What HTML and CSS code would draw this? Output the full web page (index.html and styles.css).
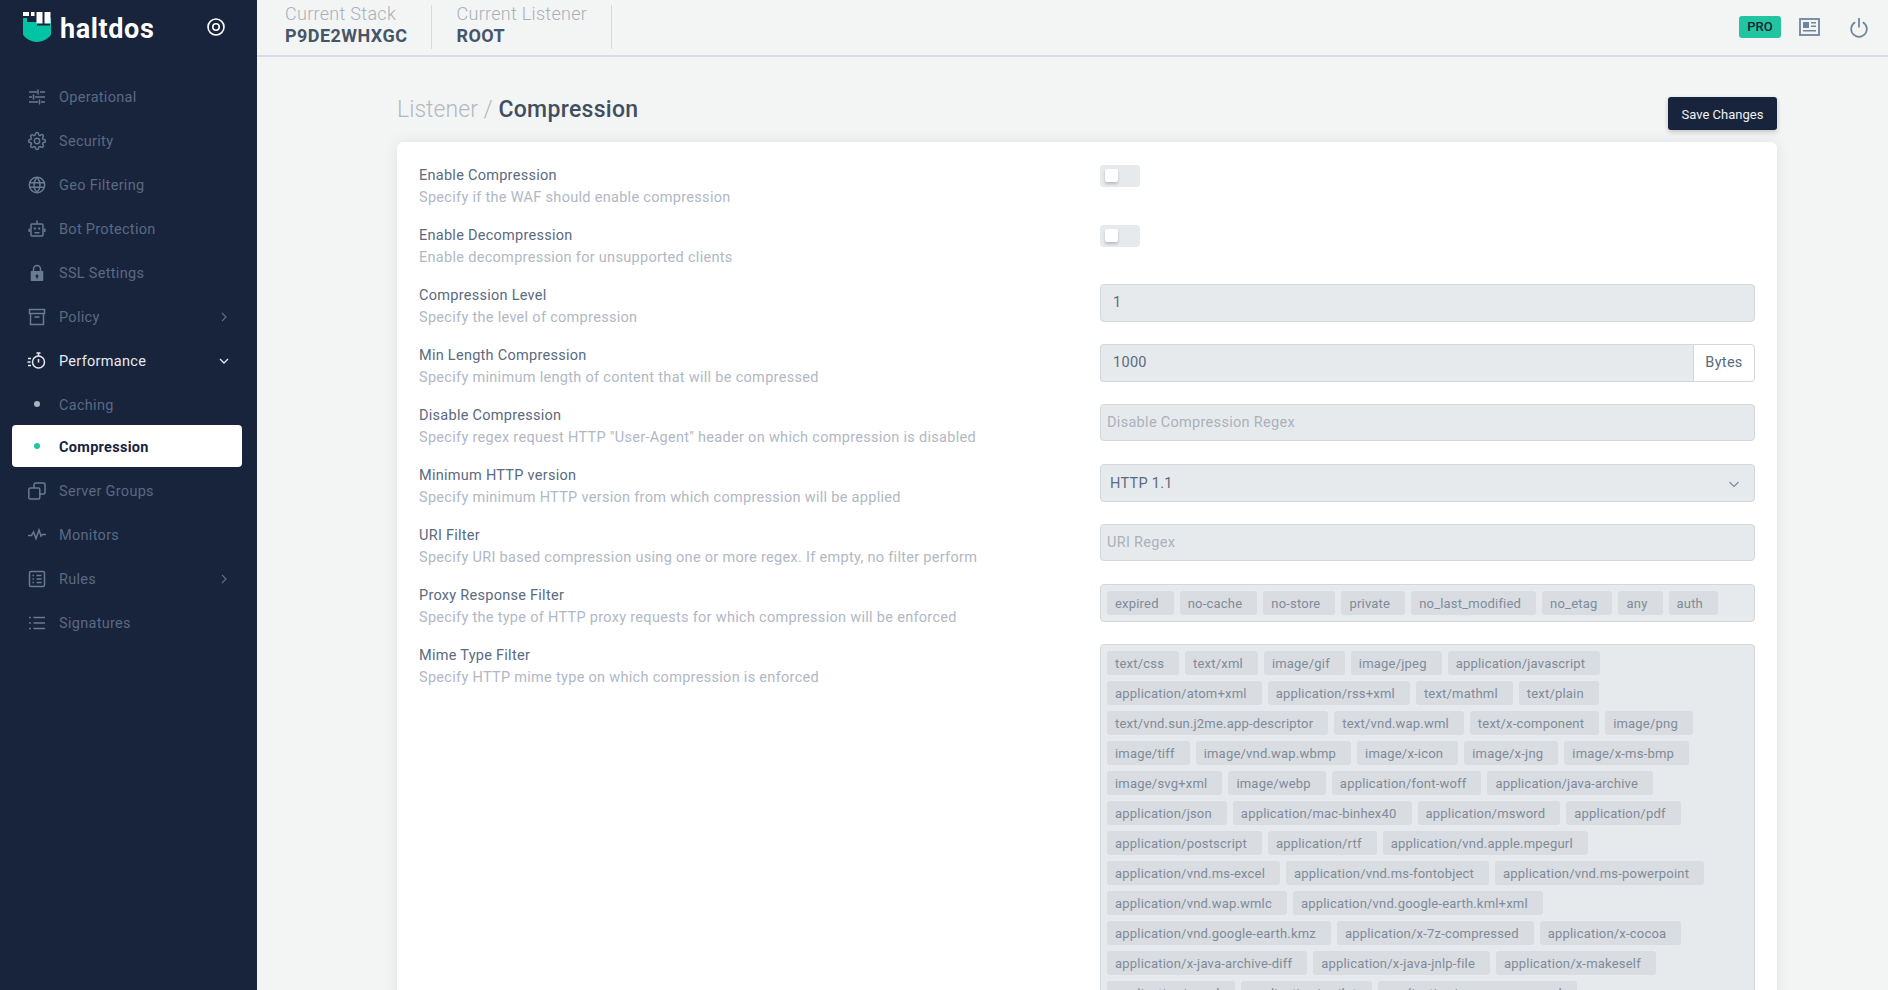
FILE: index.html
```html
<!DOCTYPE html>
<html lang="en">
<head>
<meta charset="utf-8">
<title>Listener / Compression</title>
<link rel="stylesheet" href="styles.css">
</head>
<body>
<div class="app">
  <aside class="sidebar">
    <div class="brand">
      <svg class="logo" viewBox="0 0 30 32" width="30" height="32">
        <path fill="#00c4a4" d="M1 7h4v4h10v3.500h13V7h1v16c0 3-8 8-14 8S1 26 1 23z"/>
        <path fill="#fff" d="M1 1h6v4H1zM9 1h3.500v4H9zM14.500 1h6v11.500h-6zM22.500 1h6v11.500h-6z"/>
      </svg>
      <span class="brand-name">haltdos</span>
      <svg class="target" viewBox="0 0 18 18" width="18" height="18"><circle cx="9" cy="9" r="8" fill="none" stroke="#fff" stroke-width="1.600"/><circle cx="9" cy="9" r="3.200" fill="none" stroke="#fff" stroke-width="1.600"/></svg>
    </div>
    <nav class="menu">
      <a class="item"><svg class="ico" viewBox="0 0 20 20"><path d="M2 5h8M13 5h5M2 10h3M8 10h10M2 15h9M14 15h4M11 2.500v5M6.500 7.500v5M12.500 12.500v5"/></svg><span>Operational</span></a>
      <a class="item"><svg class="ico gear" viewBox="-1 -1 26 26"><circle cx="12" cy="12" r="3.500"/><path d="M19.400 15a1.650 1.650 0 0 0 .33 1.820l.06.06a2 2 0 0 1 0 2.830 2 2 0 0 1-2.830 0l-.06-.06a1.650 1.650 0 0 0-1.820-.33 1.650 1.650 0 0 0-1 1.510V21a2 2 0 0 1-2 2 2 2 0 0 1-2-2v-.09A1.650 1.650 0 0 0 9 19.400a1.650 1.650 0 0 0-1.820.33l-.06.06a2 2 0 0 1-2.830 0 2 2 0 0 1 0-2.830l.06-.06a1.650 1.650 0 0 0 .33-1.820 1.650 1.650 0 0 0-1.510-1H3a2 2 0 0 1-2-2 2 2 0 0 1 2-2h.09A1.650 1.650 0 0 0 4.600 9a1.650 1.650 0 0 0-.33-1.820l-.06-.06a2 2 0 0 1 0-2.830 2 2 0 0 1 2.830 0l.06.06a1.650 1.650 0 0 0 1.820.33H9a1.650 1.650 0 0 0 1-1.510V3a2 2 0 0 1 2-2 2 2 0 0 1 2 2v.09a1.650 1.650 0 0 0 1 1.510 1.650 1.650 0 0 0 1.820-.33l.06-.06a2 2 0 0 1 2.830 0 2 2 0 0 1 0 2.830l-.06.06a1.650 1.650 0 0 0-.33 1.820V9a1.650 1.650 0 0 0 1.510 1H21a2 2 0 0 1 2 2 2 2 0 0 1-2 2h-.09a1.650 1.650 0 0 0-1.510 1z"/></svg><span>Security</span></a>
      <a class="item"><svg class="ico" viewBox="0 0 20 20"><circle cx="10" cy="10" r="7.700"/><path d="M2.500 7.700h15M2.500 12.300h15M10 2.300c-4 4.500-4 10.900 0 15.400M10 2.300c4 4.500 4 10.900 0 15.400"/></svg><span>Geo Filtering</span></a>
      <a class="item"><svg class="ico" viewBox="0 0 20 20"><rect x="4" y="5" width="12" height="12" rx="1"/><path d="M10 1.500V5M2.200 9.500v3.500M17.800 9.500v3.500M7.500 13.700h5"/><path class="fill" d="M6.800 8.500h2v2h-2zM11.200 8.500h2v2h-2z"/></svg><span>Bot Protection</span></a>
      <a class="item"><svg class="ico" viewBox="0 0 20 20"><path d="M6.500 8.500V6a3.500 3.500 0 0 1 7 0v2.500"/><path class="fill" fill-rule="evenodd" d="M4.500 8h11a.8.8 0 0 1 .8.800v8.400a.8.8 0 0 1-.8.800h-11a.8.8 0 0 1-.8-.800V8.800a.8.8 0 0 1 .8-.800zM10 11.500a1.400 1.400 0 0 0-.7 2.600V15.500h1.400v-1.400a1.400 1.400 0 0 0-.7-2.600z"/></svg><span>SSL Settings</span></a>
      <a class="item"><svg class="ico" viewBox="0 0 20 20"><path d="M2.500 2.500h15v4h-15zM3.500 6.500v11h13v-11M7.500 10h5"/></svg><span>Policy</span><svg class="chev" viewBox="0 0 12 12"><path d="M4 2l4 4-4 4"/></svg></a>
      <a class="item open"><svg class="ico" viewBox="0 0 20 20"><circle cx="11.500" cy="11" r="6"/><path d="M11.500 8v3.500M9.500 2h4M11.500 2v3M1 7.500h3M.5 11h3M1 14.500h3"/></svg><span>Performance</span><svg class="chev" viewBox="0 0 12 12"><path d="M2 4l4 4 4-4"/></svg></a>
      <a class="item sub"><i class="dot"></i><span>Caching</span></a>
      <a class="item sub active"><i class="dot"></i><span>Compression</span></a>
      <a class="item"><svg class="ico" viewBox="0 0 20 20"><rect x="1.800" y="7" width="11" height="11" rx="1.500"/><path d="M7 7V3.500A1.500 1.500 0 0 1 8.500 2h8A1.500 1.500 0 0 1 18 3.500v8a1.500 1.500 0 0 1-1.500 1.500H13"/></svg><span>Server Groups</span></a>
      <a class="item"><svg class="ico" viewBox="0 0 20 20"><path d="M1 10.500h3.500l2-3.500 2.500 6.500L12 5l2 6 1.500-1.500H19"/></svg><span>Monitors</span></a>
      <a class="item"><svg class="ico" viewBox="0 0 20 20"><rect x="2.500" y="2.500" width="15" height="15" rx="1.500"/><path d="M9.500 6.500h5M9.500 10h5M9.500 13.500h5M5.500 6.500h1.500M5.500 10h1.500M5.500 13.500h1.500"/></svg><span>Rules</span><svg class="chev" viewBox="0 0 12 12"><path d="M4 2l4 4-4 4"/></svg></a>
      <a class="item"><svg class="ico" viewBox="0 0 20 20"><path d="M6.500 4.500h11.500M6.500 10h11.500M6.500 15.500h11.500M2 4.500h1.800M2 10h1.800M2 15.500h1.800"/></svg><span>Signatures</span></a>
    </nav>
  </aside>
  <div class="main">
    <header class="topbar">
      <div class="ctx"><div class="ctx-label">Current Stack</div><div class="ctx-value">P9DE2WHXGC</div></div>
      <div class="ctx"><div class="ctx-label">Current Listener</div><div class="ctx-value">ROOT</div></div>
      <div class="top-actions">
        <span class="pro">PRO</span>
        <svg class="news" viewBox="0 0 21 18" width="21" height="18"><rect x="1" y="1" width="19" height="16" fill="none" stroke-width="1.800"/><path class="nf" d="M4 4h6v6H4zM12 4h5v1.500h-5zM12 7.500h5V9h-5zM4 12h13v1.500H4z"/></svg>
        <svg class="power" viewBox="0 0 18 21" width="18" height="21"><path d="M9 1v9.500M5.200 5.200a7.800 7.800 0 1 0 7.600 0" fill="none" stroke-width="1.800"/></svg>
      </div>
    </header>
    <main class="page">
      <div class="page-head">
        <h1 class="title"><span class="crumb">Listener / </span><b>Compression</b></h1>
        <button class="save">Save Changes</button>
      </div>
      <section class="card">
        <div class="row"><div class="info"><div class="name">Enable Compression</div><div class="desc">Specify if the WAF should enable compression</div></div><div class="ctl"><span class="toggle"><i></i></span></div></div>
        <div class="row"><div class="info"><div class="name">Enable Decompression</div><div class="desc">Enable decompression for unsupported clients</div></div><div class="ctl"><span class="toggle"><i></i></span></div></div>
        <div class="row"><div class="info"><div class="name">Compression Level</div><div class="desc">Specify the level of compression</div></div><div class="ctl"><div class="field">1</div></div></div>
        <div class="row"><div class="info"><div class="name">Min Length Compression</div><div class="desc">Specify minimum length of content that will be compressed</div></div><div class="ctl group"><div class="field">1000</div><div class="addon">Bytes</div></div></div>
        <div class="row"><div class="info"><div class="name">Disable Compression</div><div class="desc">Specify regex request HTTP "User-Agent" header on which compression is disabled</div></div><div class="ctl"><div class="field ph">Disable Compression Regex</div></div></div>
        <div class="row"><div class="info"><div class="name">Minimum HTTP version</div><div class="desc">Specify minimum HTTP version from which compression will be applied</div></div><div class="ctl"><div class="field select"><span>HTTP 1.1</span><svg viewBox="0 0 12 12" width="12" height="12"><path d="M1.500 4l4.500 4.500L10.500 4"/></svg></div></div></div>
        <div class="row"><div class="info"><div class="name">URI Filter</div><div class="desc">Specify URI based compression using one or more regex. If empty, no filter perform</div></div><div class="ctl"><div class="field ph">URI Regex</div></div></div>
        <div class="row"><div class="info"><div class="name">Proxy Response Filter</div><div class="desc">Specify the type of HTTP proxy requests for which compression will be enforced</div></div><div class="ctl"><div class="tags">
          <div class="tag-row"><span>expired</span><span>no-cache</span><span>no-store</span><span>private</span><span>no_last_modified</span><span>no_etag</span><span>any</span><span>auth</span></div>
        </div></div></div>
        <div class="row"><div class="info"><div class="name">Mime Type Filter</div><div class="desc">Specify HTTP mime type on which compression is enforced</div></div><div class="ctl"><div class="tags">
          <div class="tag-row"><span>text/css</span><span>text/xml</span><span>image/gif</span><span>image/jpeg</span><span>application/javascript</span></div>
          <div class="tag-row"><span>application/atom+xml</span><span>application/rss+xml</span><span>text/mathml</span><span>text/plain</span></div>
          <div class="tag-row"><span>text/vnd.sun.j2me.app-descriptor</span><span>text/vnd.wap.wml</span><span>text/x-component</span><span>image/png</span></div>
          <div class="tag-row"><span>image/tiff</span><span>image/vnd.wap.wbmp</span><span>image/x-icon</span><span>image/x-jng</span><span>image/x-ms-bmp</span></div>
          <div class="tag-row"><span>image/svg+xml</span><span>image/webp</span><span>application/font-woff</span><span>application/java-archive</span></div>
          <div class="tag-row"><span>application/json</span><span>application/mac-binhex40</span><span>application/msword</span><span>application/pdf</span></div>
          <div class="tag-row"><span>application/postscript</span><span>application/rtf</span><span>application/vnd.apple.mpegurl</span></div>
          <div class="tag-row"><span>application/vnd.ms-excel</span><span>application/vnd.ms-fontobject</span><span>application/vnd.ms-powerpoint</span></div>
          <div class="tag-row"><span>application/vnd.wap.wmlc</span><span>application/vnd.google-earth.kml+xml</span></div>
          <div class="tag-row"><span>application/vnd.google-earth.kmz</span><span>application/x-7z-compressed</span><span>application/x-cocoa</span></div>
          <div class="tag-row"><span>application/x-java-archive-diff</span><span>application/x-java-jnlp-file</span><span>application/x-makeself</span></div>
          <div class="tag-row"><span>application/x-perl</span><span>application/x-pilot</span><span>application/x-rar-compressed</span></div>
        </div></div></div>
      </section>
    </main>
  </div>
</div>
</body>
</html>
```
FILE: styles.css
```css
* { box-sizing: border-box; }
html, body { margin: 0; height: 100%; overflow: hidden; }
body { font-family: Roboto, "Noto Sans", sans-serif; font-size: 14px; color: #5a6a80; background: #f3f5f5; }
.app { display: flex; height: 990px; overflow: hidden; }

.sidebar { width: 257px; flex: none; background: #18233c; }
.brand { height: 56px; display: flex; align-items: center; padding-left: 22px; }
.logo { flex: none; margin-right: 8px; margin-top: -2px; }
.brand-name { color: #fff; font-size: 27px; font-weight: 700; width: 147px; letter-spacing: .6px; padding-top: 1px; }
.target { flex: none; margin-top: -2px; }
.menu { padding: 19px 15px 0 12px; display: flex; flex-direction: column; }
.item { height: 44px; display: flex; align-items: center; padding-left: 15px; color: #5a6a82; font-size: 14.500px; letter-spacing: .3px; border-radius: 4px; }
.ico { width: 20px; height: 20px; flex: none; margin-right: 12px; fill: none; stroke: #6a7a90; stroke-width: 1.500; }
.ico.gear { stroke-width: 1.900; }
.ico .fill { fill: #6a7a90; stroke: none; }
.chev { width: 12px; height: 12px; margin-left: auto; margin-right: 12px; fill: none; stroke: #5a6a82; stroke-width: 1.300; }
.item.open { color: #e6eaf0; }
.item.open .ico, .item.open .chev { stroke: #e6eaf0; }
.item.sub { height: 42px; padding-left: 22px; padding-top: 2px; }
.dot { width: 6px; height: 6px; border-radius: 50%; background: #a9b2bf; margin: -3px 19px 0 0; flex: none; }
.item.active { background: #fff; color: #18233c; font-weight: 700; margin-bottom: 2px; }
.item.active .dot { background: #22c5a0; }

.main { flex: 1; min-width: 0; display: flex; flex-direction: column; }
.topbar { height: 57px; flex: none; border-bottom: 2px solid #d9dce2; display: flex; align-items: center; padding: 0 20px 2px 28px; }
.ctx { border-right: 1px solid #d5d8dd; height: 44px; margin-right: 24px; padding-right: 24px; display: flex; flex-direction: column; justify-content: center; }
.ctx-label { color: #a9b0ba; font-size: 18px; line-height: 22px; margin-top: -4px; letter-spacing: .3px; font-weight: 300; }
.ctx-value { color: #475569; font-size: 18px; line-height: 22px; font-weight: 700; letter-spacing: .45px; }
.top-actions { margin-left: auto; display: flex; align-items: center; padding-top: 1px; }
.pro { width: 42px; height: 22px; background: #22c5a0; border-radius: 3px; color: #18233c; font-size: 13px; font-weight: 500; text-align: center; line-height: 22px; margin-right: 18px; }
.news { margin-right: 30px; stroke: #6f859f; }
.news .nf { fill: #6f859f; stroke: none; }
.power { stroke: #6f859f; }

.page { flex: 1; min-height: 0; padding: 0 111px 0 140px; }
.page-head { height: 85px; display: flex; justify-content: space-between; align-items: flex-end; }
.title { margin: 0 0 18px; font-size: 23px; font-weight: 400; line-height: 28px; letter-spacing: .05px; }
.crumb { color: #b1b8c2; font-weight: 300; }
.title b { color: #3f4e62; font-weight: 500; letter-spacing: .3px; }
.save { width: 109px; height: 33px; background: #18233c; border: 0; padding: 2px 0 0; border-radius: 3px; color: #eef1f5; font: 13px Roboto, sans-serif; box-shadow: 0 2px 5px rgba(0,0,0,.2); margin-bottom: 12px; }
.card { background: #fff; border-radius: 6px 6px 0 0; box-shadow: 0 0 14px rgba(40,50,70,.1); padding: 22px 22px 30px; }
.row { display: flex; min-height: 60px; }
.info { width: 681px; flex: none; padding-top: 1px; }
.name { font-size: 14.500px; line-height: 22px; color: #5a6a80; letter-spacing: .27px; }
.desc { font-size: 14.500px; line-height: 22px; color: #b1b8c4; letter-spacing: .3px; }
.ctl { flex: 1; min-width: 0; }
.group { display: flex; align-self: flex-start; }
.toggle { display: block; width: 40px; height: 22px; margin-top: 1px; background: #e7eaed; border-radius: 4px; padding: 4px 5px; }
.toggle i { display: block; width: 13px; height: 13px; background: #fff; border-radius: 2px; box-shadow: 0 2px 3px rgba(0,0,0,.2); }
.field { height: 38px; flex: 1; background: #e7eaed; border: 1px solid #d3d7dc; border-radius: 4px; padding: 0 12px; line-height: 36px; font-size: 14.500px; letter-spacing: .3px; color: #5a6a80; }
.group .field { border-radius: 4px 0 0 4px; border-right: 0; }
.addon { width: 62px; border: 1px solid #d3d7dc; border-radius: 0 4px 4px 0; line-height: 36px; text-align: center; background: #fff; color: #5a6a80; font-size: 14.500px; letter-spacing: .3px; }
.field.ph { color: #aab1bb; padding-left: 6px; height: 37px; }
.select { display: flex; justify-content: space-between; align-items: center; padding: 1px 14px 0 9px; }
.select svg { fill: none; stroke: #7c8a9c; stroke-width: 1.200; }
.tags { background: #e7eaed; border: 1px solid #d3d7dc; border-radius: 4px; padding: 3px 6px; }
.tag-row { display: flex; gap: 6px; }
.tag-row span { height: 24px; margin: 3px 0; padding: 1px 15px 0 8px; line-height: 24px; font-size: 13px; letter-spacing: .2px; color: #7f8b99; background: #d9dce1; border-radius: 3px; white-space: nowrap; }
```
